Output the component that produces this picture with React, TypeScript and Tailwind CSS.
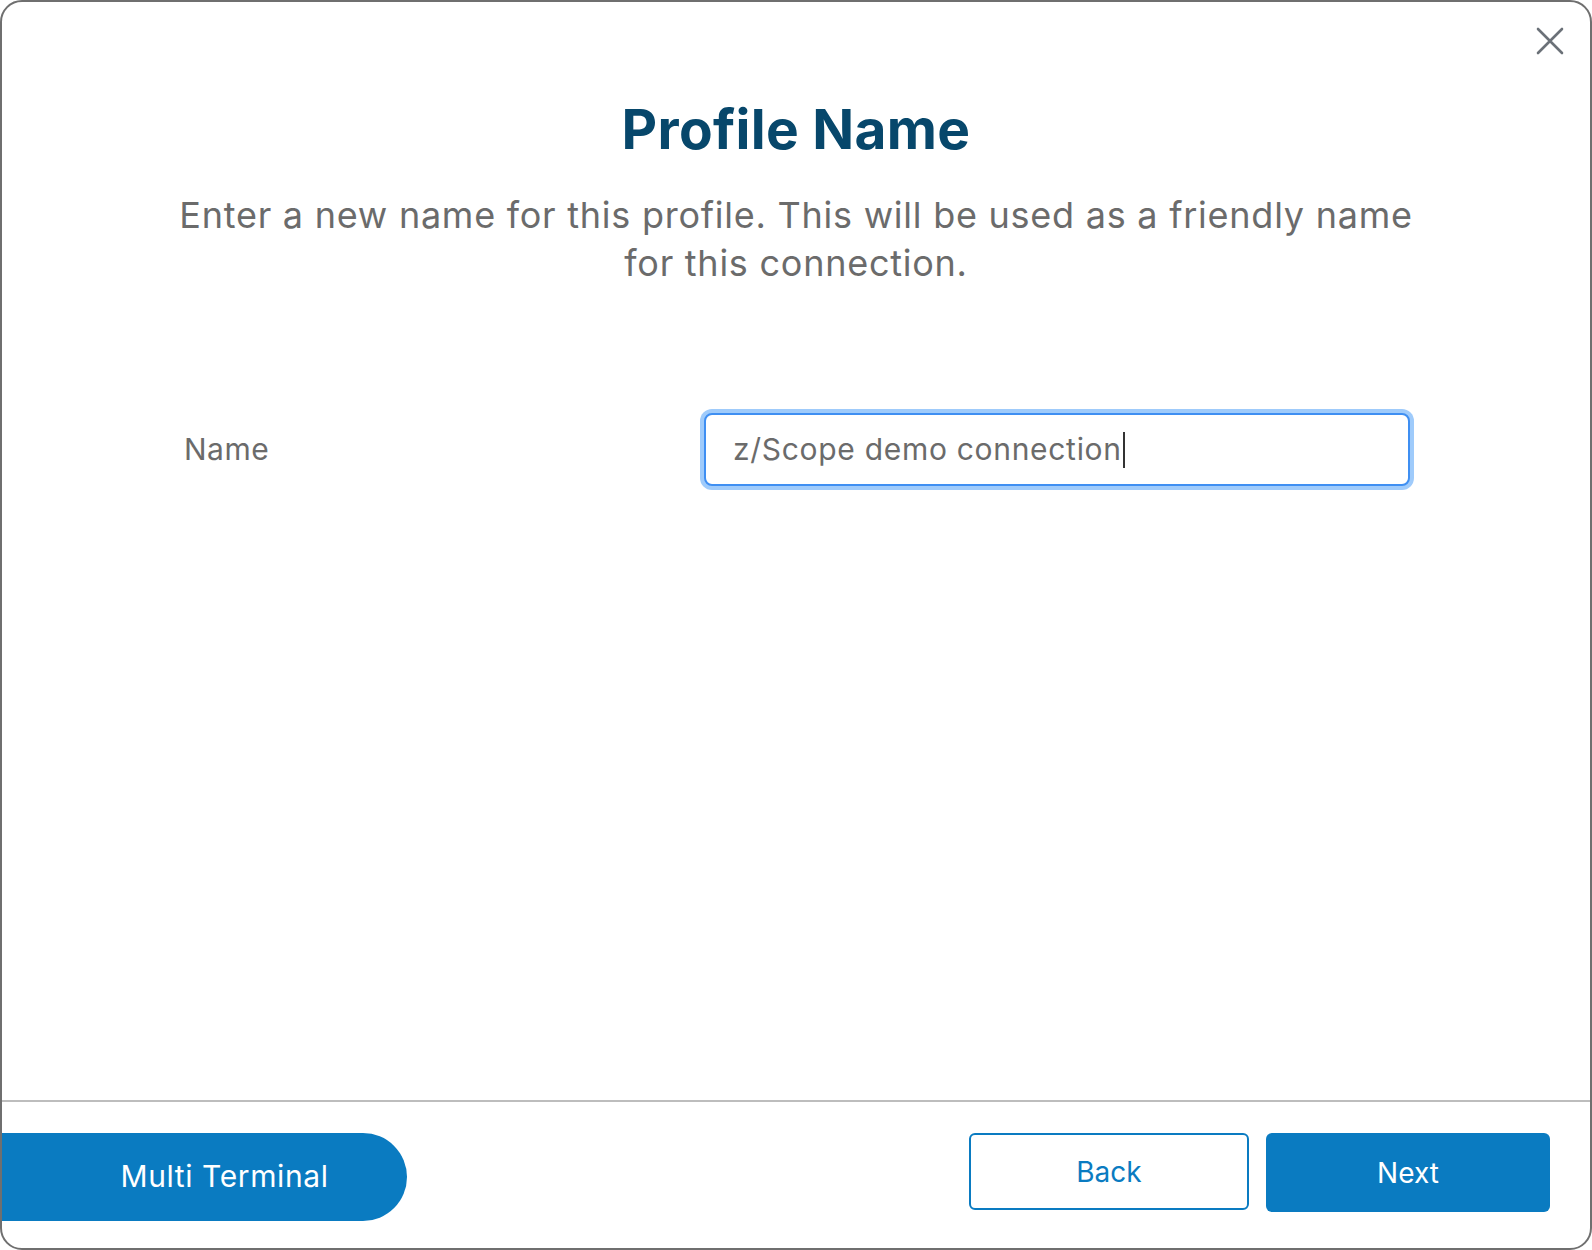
import React from 'react';

const CloseIcon = () => (
  <svg width="28" height="28" viewBox="0 0 28 28" fill="none">
    <path d="M2 2L26 26M26 2L2 26" stroke="#6b7178" strokeWidth="2.6" strokeLinecap="round" />
  </svg>
);

export default function App() {
  return (
    <div className="w-[1592px] h-[1250px] bg-white">
      <div className="relative w-full h-full bg-white border-2 border-[#6f6f6f] rounded-[22px] overflow-hidden flex flex-col font-['Inter','Liberation_Sans',sans-serif]">
        {/* close */}
        <button className="absolute right-[26px] top-[25px] w-[28px] h-[28px] flex items-center justify-center">
          <CloseIcon />
        </button>

        {/* body */}
        <div className="flex-1 flex flex-col items-center pt-[95px]">
          <h1 className="text-[55px] leading-[64px] font-bold text-[#07476b] tracking-[0.3px]">Profile Name</h1>
          <p className="mt-[30px] w-[1300px] text-center text-[36px] leading-[48px] text-[#6b6b6b] tracking-[0.75px]">
            Enter a new name for this profile. This will be used as a friendly name
            <br />
            for this connection.
          </p>

          <div className="mt-[126px] w-[1228px] flex items-center">
            <label className="w-[522px] pl-[2px] text-[30px] text-[#6b6b6b] tracking-[0.5px]">Name</label>
            <div className="w-[706px] h-[73px] rounded-[8px] border-2 border-[#3f8ff2] ring-4 ring-[#9fcbfb] bg-white flex items-center pl-[27px]">
              <span className="text-[30px] text-[#6b6b6b] tracking-[0.7px]">z/Scope demo connection</span>
              <span className="w-[2px] h-[36px] bg-[#333] ml-[1px]" />
            </div>
          </div>
        </div>

        {/* divider */}
        <div className="h-[2px] bg-[#bdbdbd]" />

        {/* footer */}
        <div className="h-[146px] flex items-start justify-between pt-[31px]">
          <button className="w-[405px] h-[88px] bg-[#0a7bc1] rounded-r-full pl-[40px] pb-[2px] flex items-center justify-center text-white text-[30px] tracking-[0.6px]">
            Multi Terminal
          </button>
          <div className="flex items-start gap-[17px] pr-[40px]">
            <button className="w-[280px] h-[77px] rounded-[6px] border-2 border-[#0a7bc1] bg-white text-[#0a7bc1] text-[28px] flex items-center justify-center">
              Back
            </button>
            <button className="w-[284px] h-[79px] rounded-[6px] bg-[#0a7bc1] text-white text-[28px] flex items-center justify-center">
              Next
            </button>
          </div>
        </div>
      </div>
    </div>
  );
}
